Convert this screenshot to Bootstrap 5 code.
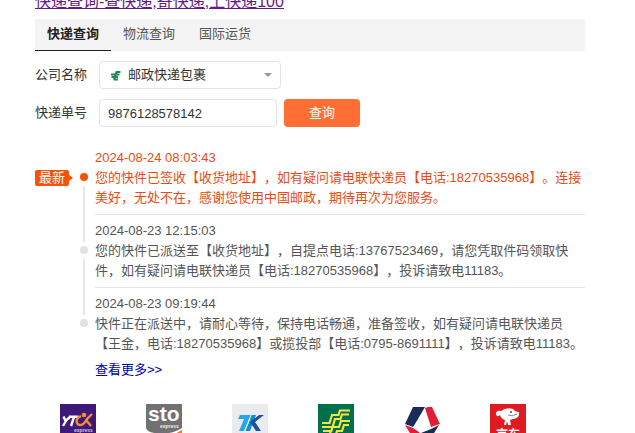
<!DOCTYPE html>
<html lang="zh-CN">
<head>
<meta charset="utf-8">
<meta name="viewport" content="width=device-width, initial-scale=1">
<title>快递查询</title>
<link rel="stylesheet" href="https://cdn.jsdelivr.net/npm/bootstrap@5.3.0/dist/css/bootstrap.min.css">
<style>
body { font: 13px/20px "Liberation Sans", "Noto Sans CJK SC", sans-serif; color: #333; background: #fff; text-spacing-trim: space-all; overflow-x: hidden; scrollbar-width: none; }
.page { padding: 0 50px 0 35px; }
.headline { font-size: 16px; line-height: 24px; margin: -10px 0 5px; font-weight: 400; }
.headline a { color: #641c84; }
.query-tabs { background: #f4f4f4; }
.query-tabs button { border: 0; border-bottom: 1px solid transparent; background: none; padding: 5px 12px 6px; color: #555; }
.query-tabs button.active { color: #222; font-weight: 700; border-bottom-color: #222; }
.query-form { padding-top: 10px; }
.field-label { width: 64px; }
.field { height: 28px; border: 1px solid #e4e4e4; border-radius: 4px; background: #fff; color: #333; }
.number-row { padding-top: 10px; }
.carrier { width: 182px; }
.carrier select { appearance: none; padding: 0 28px; }
.carrier-mark { left: 11px; top: 9px; }
.carrier-caret { right: 9px; top: 12px; }
.number { width: 178px; padding: 0 8px; }
.search { width: 76px; height: 28px; margin-left: 7px; border: 0; border-radius: 4px; background: #ff6f33; color: #fff; }
.track { padding-top: 15px; color: #555; }
.rail { width: 60px; padding-right: 6px; }
.stem { width: 10px; }
.stem-top { width: 2px; height: 27px; background: #e7e7e7; }
.stem-rest { width: 2px; background: #e7e7e7; }
.dot { width: 8px; height: 8px; margin: 4px 0 5px; border-radius: 50%; background: #e2e2e2; }
.event { padding: 6px 0; border-bottom: 1px solid #e4e4e4; }
.track li:last-child .event { border-bottom: 0; }
.latest .event { color: #ec4a12; }
.latest .dot { background: #f9500c; }
.latest .stem-top, .track li:last-child .stem-rest { visibility: hidden; }
.flag { margin-top: 28px; width: 34px; height: 16px; line-height: 16px; border-radius: 2px; background: #f9500c; color: #fff; text-align: center; }
.flag::after { content: ""; position: absolute; left: 100%; top: 5px; border: 3px solid transparent; border-left: 4px solid #f9500c; border-right: 0; }
.more { padding-left: 60px; }
.more a { color: #0000b4; }
.carriers { padding: 24px 34px 0 0; }
.carriers svg { display: block; }
</style>
<script src="https://cdn.jsdelivr.net/npm/bootstrap@5.3.0/dist/js/bootstrap.bundle.min.js"></script>
</head>
<body>
<main class="page">
  <h1 class="headline"><a href="#">快递查询-查快递,寄快递,上快递100</a></h1>

  <nav class="query-tabs d-flex" aria-label="查询类型">
    <button type="button" class="active">快递查询</button>
    <button type="button">物流查询</button>
    <button type="button">国际运货</button>
  </nav>

  <form class="query-form">
    <div class="d-flex align-items-center">
      <label class="field-label" for="carrier">公司名称</label>
      <div class="carrier position-relative">
        <select id="carrier" class="field w-100"><option>邮政快递包裹</option></select>
        <svg class="carrier-mark position-absolute pe-none" width="11" height="11" viewBox="0 0 11 11" fill="none" stroke="#218653" aria-hidden="true"><path d="M10.5 2H6.500L4 9.500M9.500 4.500H1M8 7H1.500M8 9.500H3.500" stroke-width="2"/></svg>
        <svg class="carrier-caret position-absolute pe-none" width="8" height="4" viewBox="0 0 8 4" aria-hidden="true"><path d="M0 0H8L4 4Z" fill="#999"/></svg>
      </div>
    </div>
    <div class="number-row d-flex align-items-center">
      <label class="field-label" for="number">快递单号</label>
      <input id="number" class="field number" type="text" value="9876128578142">
      <button class="search" type="submit">查询</button>
    </div>

    <ol class="track list-unstyled mb-0">
      <li class="latest d-flex">
        <div class="rail d-flex flex-shrink-0 justify-content-between">
          <div><div class="flag position-relative">最新</div></div>
          <div class="stem d-flex flex-column align-items-center"><i class="stem-top"></i><i class="dot"></i><i class="stem-rest flex-fill"></i></div>
        </div>
        <div class="event flex-fill"><time class="d-block">2024-08-24 08:03:43</time>您的快件已签收【收货地址】，如有疑问请电联快递员【电话:18270535968】。连接美好，无处不在，感谢您使用中国邮政，期待再次为您服务。</div>
      </li>
      <li class="d-flex">
        <div class="rail d-flex flex-shrink-0 justify-content-end">
          <div class="stem d-flex flex-column align-items-center"><i class="stem-top"></i><i class="dot"></i><i class="stem-rest flex-fill"></i></div>
        </div>
        <div class="event flex-fill"><time class="d-block">2024-08-23 12:15:03</time>您的快件已派送至【收货地址】，自提点电话:13767523469，请您凭取件码领取快件，如有疑问请电联快递员【电话:18270535968】，投诉请致电11183。</div>
      </li>
      <li class="d-flex">
        <div class="rail d-flex flex-shrink-0 justify-content-end">
          <div class="stem d-flex flex-column align-items-center"><i class="stem-top"></i><i class="dot"></i><i class="stem-rest flex-fill"></i></div>
        </div>
        <div class="event flex-fill"><time class="d-block">2024-08-23 09:19:44</time>快件正在派送中，请耐心等待，保持电话畅通，准备签收，如有疑问请电联快递员【王金，电话:18270535968】或揽投部【电话:0795-8691111】，投诉请致电11183。</div>
      </li>
    </ol>
    <div class="more"><a class="text-decoration-none" href="#">查看更多&gt;&gt;</a></div>
  </form>

  <div class="carriers">
    <div class="row row-cols-6 g-0">
      <a class="col d-flex justify-content-center" href="#" aria-label="圆通">
        <svg width="36" height="36" viewBox="0 0 36 36"><path fill="#3d1a78" d="M0 0H36V36H0Z"/><g fill="none" stroke-width="2.4"><path stroke="#fff" d="M3.500 12.500L5.500 17L10.500 12.500M6 17L3 22M9 12.800H18M14 13L11 22"/><path stroke="#f58c3c" d="M21 12.500C16 12.500 15 21 20 21C24 21 25 18 27 15L32 10M26 16L31 22"/></g><circle cx="24" cy="11" r="2.300" fill="#f58c3c"/><text x="14" y="28" font-size="5" font-weight="700" fill="#d4c5ec">express</text></svg>
      </a>
      <a class="col d-flex justify-content-center" href="#" aria-label="申通">
        <svg width="36" height="36" viewBox="0 0 36 36"><path fill="#717173" d="M0 0H36V24Q27 30 14 29.500Q1 29 0 24Z"/><path fill="#f47b20" d="M24 31Q31 29.500 36 26V36H20Z"/><text x="2" y="17" font-size="21" font-weight="700" fill="#fff">sto</text><text x="14" y="24" font-size="5" font-weight="700" fill="#eee">express</text></svg>
      </a>
      <a class="col d-flex justify-content-center" href="#" aria-label="天天">
        <svg width="36" height="36" viewBox="0 0 36 36"><path fill="#ebeaec" d="M0 0H36V36H0Z"/><path fill="#27a8e0" d="M8 11H22L20 15H17L12 27H7L12 15H6Z"/><path fill="#1689cf" d="M20 11H24L18 27H13Z"/><path fill="#17549c" d="M27 11H32L23 18L29 27H24L18 18Z"/><path stroke="#ebeaec" d="M19 11L13 27"/></svg>
      </a>
      <a class="col d-flex justify-content-center" href="#" aria-label="邮政">
        <svg width="36" height="36" viewBox="0 0 36 36"><path fill="#00704a" d="M0 0H36V36H0Z"/><path fill="none" stroke="#f5e342" stroke-width="2.200" d="M32 6.500H22L20.500 11H14L11.500 19H4M31 10.500H24L22.500 15H17L13 28M4 23H21L23 17H32M5 27H13M31 21H26L24 27H19L17 33H11L13 26"/></svg>
      </a>
      <a class="col d-flex justify-content-center" href="#" aria-label="德邦">
        <svg width="36" height="36" viewBox="0 0 36 36"><path fill="#1b2b59" d="M9 3H21L11 20L9 23L1 20Z"/><path fill="#e01e35" d="M21 4L24 3H28L36 20L27 23Z"/><path fill="#e01e35" d="M1 21L9 24L15 28L19 34H9Z"/><path fill="#1b2b59" d="M35 21L27 34H19L17 29L27 25Z"/></svg>
      </a>
      <a class="col d-flex justify-content-center" href="#" aria-label="京东">
        <svg width="36" height="36" viewBox="0 0 36 36"><path fill="#df1b22" d="M0 0H36V36H0Z"/><path fill="#fff" d="M6 10Q6 6 11 7Q16 3 23 5Q25 8 29 8Q30 14 23 15L20 16L21 21H18L17 17L16 21H14L15 16Q11 15 10 11Q7 14 6 10Z"/><circle cx="21" cy="8" r=".9" fill="#333"/><path d="M18 11Q22 13 27 10" fill="none" stroke="#555" stroke-width=".7"/><text x="6" y="35" font-size="12" font-weight="700" fill="#fff">京东</text></svg>
      </a>
    </div>
  </div>
</main>
</body>
</html>
